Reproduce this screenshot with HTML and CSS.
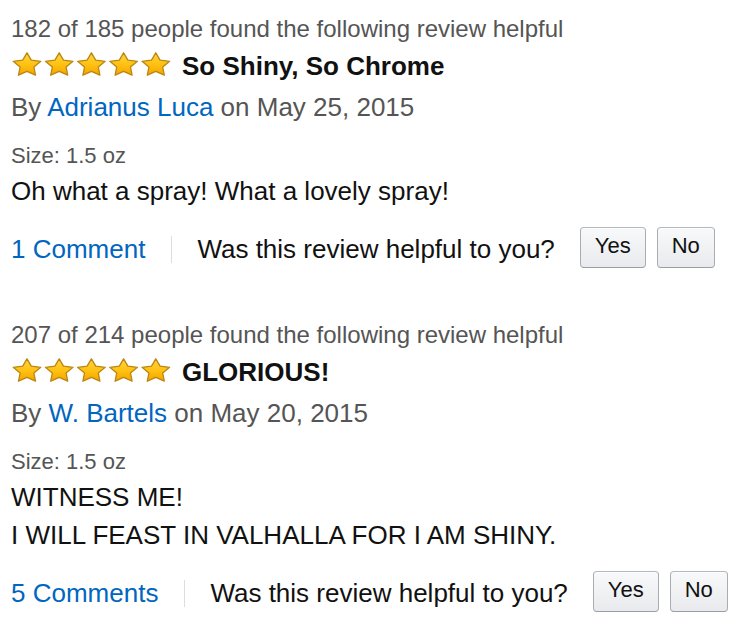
FILE: index.html
```html
<!DOCTYPE html>
<html>
<head>
<meta charset="utf-8">
<title>Reviews</title>
<link rel="stylesheet" href="styles.css">
</head>
<body>
<div class="page">
  <div class="review">
    <div class="helpful">182 of 185 people found the following review helpful</div>
    <div class="title-row">
      <svg class="stars" viewBox="0 0 159 24" width="159" height="24" aria-hidden="true">
        <defs>
          <linearGradient id="sg1" x1="0" y1="0" x2="0" y2="1">
            <stop offset="0" stop-color="#ffd640"/>
            <stop offset="0.55" stop-color="#ffc010"/>
            <stop offset="1" stop-color="#f3a400"/>
          </linearGradient>
          <polygon id="st1" points="15,0.8 19.3,8.2 28.8,9.35 21.9,15.1 23.5,23.2 15,19.4 6.5,23.2 8.1,15.1 1.2,9.35 10.7,8.2" fill="url(#sg1)" stroke="#bb8611" stroke-width="1.3" stroke-linejoin="round"/>
        </defs>
        <use href="#st1" x="0"/>
        <use href="#st1" x="32.2"/>
        <use href="#st1" x="64.4"/>
        <use href="#st1" x="96.6"/>
        <use href="#st1" x="128.8"/>
      </svg>
      <span class="title">So Shiny, So Chrome</span>
    </div>
    <div class="byline">By <a class="link" href="#">Adrianus Luca</a> on May 25, 2015</div>
    <div class="size">Size: 1.5 oz</div>
    <div class="body">Oh what a spray! What a lovely spray!</div>
    <div class="actions">
      <a class="link comments" href="#">1 Comment</a>
      <span class="sep"></span>
      <span class="question">Was this review helpful to you?</span>
      <button class="btn yes">Yes</button>
      <button class="btn">No</button>
    </div>
  </div>

  <div class="review">
    <div class="helpful">207 of 214 people found the following review helpful</div>
    <div class="title-row">
      <svg class="stars" viewBox="0 0 159 24" width="159" height="24" aria-hidden="true">
        <defs>
          <linearGradient id="sg2" x1="0" y1="0" x2="0" y2="1">
            <stop offset="0" stop-color="#ffd640"/>
            <stop offset="0.55" stop-color="#ffc010"/>
            <stop offset="1" stop-color="#f3a400"/>
          </linearGradient>
          <polygon id="st2" points="15,0.8 19.3,8.2 28.8,9.35 21.9,15.1 23.5,23.2 15,19.4 6.5,23.2 8.1,15.1 1.2,9.35 10.7,8.2" fill="url(#sg2)" stroke="#bb8611" stroke-width="1.3" stroke-linejoin="round"/>
        </defs>
        <use href="#st2" x="0"/>
        <use href="#st2" x="32.2"/>
        <use href="#st2" x="64.4"/>
        <use href="#st2" x="96.6"/>
        <use href="#st2" x="128.8"/>
      </svg>
      <span class="title">GLORIOUS!</span>
    </div>
    <div class="byline">By <a class="link" href="#">W. Bartels</a> on May 20, 2015</div>
    <div class="size">Size: 1.5 oz</div>
    <div class="body">WITNESS ME!<br>I WILL FEAST IN VALHALLA FOR I AM SHINY.</div>
    <div class="actions">
      <a class="link comments" href="#">5 Comments</a>
      <span class="sep"></span>
      <span class="question">Was this review helpful to you?</span>
      <button class="btn yes">Yes</button>
      <button class="btn">No</button>
    </div>
  </div>
</div>
</body>
</html>
```

FILE: styles.css
```css
html, body {
  margin: 0;
  padding: 0;
  background: #ffffff;
}

.page {
  padding: 10px 0 0 11px;
  font-family: "Liberation Sans", Arial, Helvetica, sans-serif;
  color: #111111;
}

.review {
  margin-bottom: 45px;
}

.helpful {
  font-size: 24px;
  line-height: 38px;
  color: #555555;
  white-space: nowrap;
}

.title-row {
  display: flex;
  align-items: flex-start;
  height: 36px;
}

.stars {
  display: block;
  margin: 4px 0 0 1px;
  flex: none;
}

.title {
  margin-left: 11px;
  font-size: 26px;
  line-height: 36px;
  font-weight: bold;
  color: #111111;
  white-space: nowrap;
}

.byline {
  margin-top: 4px;
  font-size: 26px;
  line-height: 38px;
  color: #555555;
  white-space: nowrap;
}

.link {
  color: #0066c0;
  text-decoration: none;
}

.size {
  margin-top: 15px;
  font-size: 22px;
  line-height: 30px;
  color: #555555;
}

.body {
  margin-top: 1px;
  font-size: 26px;
  line-height: 38px;
  color: #111111;
  white-space: nowrap;
}

.actions {
  margin-top: 17px;
  display: flex;
  align-items: flex-start;
  white-space: nowrap;
}

.comments,
.question {
  font-size: 26px;
  line-height: 44px;
}

.question {
  color: #111111;
}

.sep {
  width: 1px;
  height: 27px;
  margin: 9px 25px 0 26px;
  background: #dddddd;
  flex: none;
}

.btn {
  box-sizing: border-box;
  height: 41px;
  margin: 0;
  padding: 0 14px 4px;
  border: 1px solid #a9acb1;
  border-top-color: #b5b8bd;
  border-bottom-color: #9a9da2;
  border-radius: 4px;
  background: linear-gradient(to bottom, #f8f9fa, #e8eaed);
  box-shadow: inset 0 1px 0 rgba(255, 255, 255, 0.7);
  font-family: "Liberation Sans", Arial, Helvetica, sans-serif;
  font-size: 22px;
  line-height: 35px;
  color: #111111;
  flex: none;
}

.btn.yes {
  margin-left: 25px;
  margin-right: 11px;
}
```
